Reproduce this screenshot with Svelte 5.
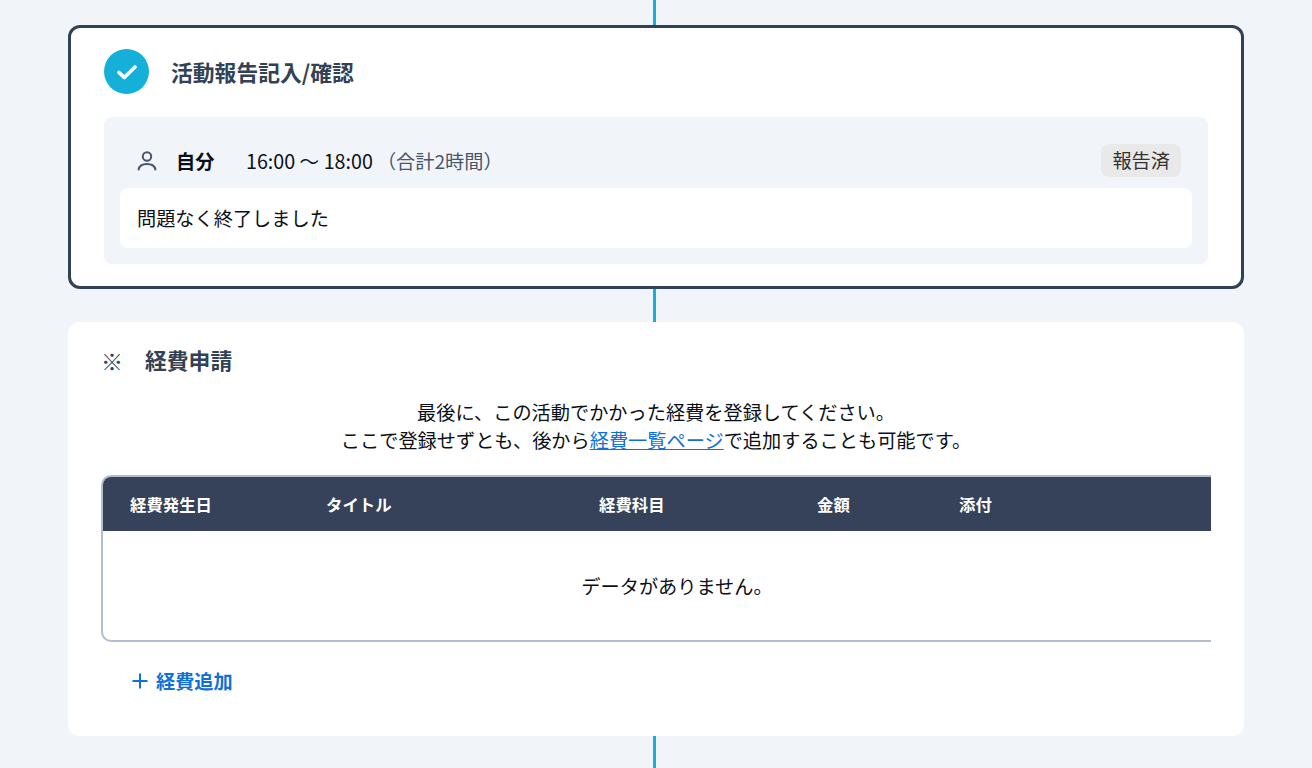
<script>
    const columns = [
        { label: '経費発生日', width: 196 },
        { label: 'タイトル', width: 273 },
        { label: '経費科目', width: 218 },
        { label: '金額', width: 142 },
        { label: '添付', width: 252 }
    ];
</script>

<div class="page">
    <div class="connector top"></div>

    <section class="card current">
        <header class="step-head">
            <span class="step-check">
                <svg width="24" height="24" viewBox="0 0 24 24" fill="none">
                    <path d="M4 12.500l5.200 5L20 7" stroke="#fff" stroke-width="3.800" stroke-linecap="round" stroke-linejoin="round" />
                </svg>
            </span>
            <h2 class="step-title">活動報告記入/確認</h2>
        </header>

        <div class="report">
            <div class="report-row">
                <svg class="person" width="24" height="24" viewBox="0 0 24 24" fill="none" stroke="#475569" stroke-width="2" stroke-linecap="round">
                    <circle cx="12" cy="7.500" r="4.200" />
                    <path d="M3.600 20.500c.6-3.600 3.400-5.600 8.400-5.600s7.800 2 8.400 5.600" />
                </svg>
                <span class="who">自分</span>
                <span class="time">16:00 〜 18:00</span>
                <span class="total">（合計2時間）</span>
                <span class="badge">報告済</span>
            </div>
            <div class="comment">問題なく終了しました</div>
        </div>
    </section>

    <div class="connector middle"></div>

    <section class="card expense">
        <header class="expense-head">
            <span class="mark">※</span>
            <h2>経費申請</h2>
        </header>

        <p class="lead">
            最後に、この活動でかかった経費を登録してください。<br />
            ここで登録せずとも、後から<a href="#expenses">経費一覧ページ</a>で追加することも可能です。
        </p>

        <div class="table-wrap">
            <div class="table-head">
                {#each columns as col}
                    <div class="th" style="width: {col.width}px">{col.label}</div>
                {/each}
            </div>
            <div class="empty">データがありません。</div>
        </div>

        <button class="add" type="button">
            <svg width="18" height="18" viewBox="0 0 18 18" fill="none" stroke="#1170d8" stroke-width="2">
                <path d="M9 1.500v15M1.500 9h15" />
            </svg>
            経費追加
        </button>
    </section>

    <div class="connector bottom"></div>
</div>

<style>
    :global(body) {
        margin: 0;
        background: #f1f5f9;
        overflow: hidden;
    }

    .page {
        width: 1176px;
        height: 768px;
        margin-left: 68px;
        display: flex;
        flex-direction: column;
        overflow: hidden;
        font-family: "Noto Sans CJK JP", "Noto Sans", sans-serif;
        font-size: 19.2px;
        color: #0b0f17;
    }

    .connector {
        width: 3px;
        margin-left: 585px;
        background: #14b0d8;
        flex: none;
    }

    .connector.top {
        height: 25px;
    }

    .connector.middle {
        height: 33px;
    }

    .connector.bottom {
        height: 32px;
    }

    .card {
        box-sizing: border-box;
        background: #fff;
        border-radius: 12px;
        flex: none;
    }

    .card.current {
        height: 264px;
        border: 3px solid #334155;
        padding: 21px 33px 22px;
    }

    .step-head {
        display: flex;
        align-items: center;
        gap: 22px;
        height: 45px;
    }

    .step-check {
        width: 45px;
        height: 45px;
        border-radius: 50%;
        background: #14b0d8;
        display: flex;
        align-items: center;
        justify-content: center;
    }

    h2 {
        margin: 0;
        font-size: 21.8px;
        font-weight: 700;
        color: #334155;
        line-height: 1.4;
    }

    .step-title {
        padding-top: 2px;
    }

    .report {
        margin-top: 23px;
        background: #f1f5f9;
        border-radius: 8px;
        padding: 16px;
    }

    .report-row {
        display: flex;
        align-items: center;
        height: 55px;
        padding: 0 11px 0 15px;
    }

    .person {
        flex: none;
        margin-right: 17px;
    }

    .who {
        font-weight: 700;
        width: 70px;
    }

    .time {
        font-size: 19.7px;
        margin-right: 4px;
    }

    .total {
        color: #475569;
    }

    .badge {
        margin-left: auto;
        background: #e9e9ea;
        color: #333;
        border-radius: 8px;
        padding: 0 11px;
        height: 33px;
        line-height: 33px;
    }

    .comment {
        background: #fff;
        border-radius: 8px;
        height: 60px;
        line-height: 60px;
        padding: 0 17px;
    }

    .card.expense {
        height: 414px;
        padding: 19px 33px 0;
    }

    .expense-head {
        display: flex;
        align-items: center;
        height: 38px;
    }

    .mark {
        width: 44px;
        font-size: 22px;
        color: #334155;
    }

    .lead {
        margin: 20px 0 0;
        text-align: center;
        line-height: 27.5px;
    }

    .lead a {
        color: #1170d8;
        text-decoration: underline;
    }

    .table-wrap {
        box-sizing: border-box;
        margin-top: 21px;
        height: 167px;
        border: 2px solid #b3bdce;
        border-right: none;
        border-radius: 10px 0 0 10px;
        overflow: hidden;
    }

    .table-head {
        display: flex;
        align-items: center;
        height: 54px;
        background: #354259;
    }

    .th {
        box-sizing: border-box;
        padding-left: 27px;
        color: #fff;
        font-size: 16.4px;
        font-weight: 700;
    }

    .empty {
        height: 109px;
        padding-left: 40px;
        display: flex;
        align-items: center;
        justify-content: center;
    }

    .add {
        display: flex;
        align-items: center;
        gap: 7px;
        margin: 22px 0 0 30px;
        padding: 0;
        border: none;
        background: none;
        font: inherit;
        font-weight: 700;
        color: #1170d8;
        line-height: 34px;
    }
</style>
